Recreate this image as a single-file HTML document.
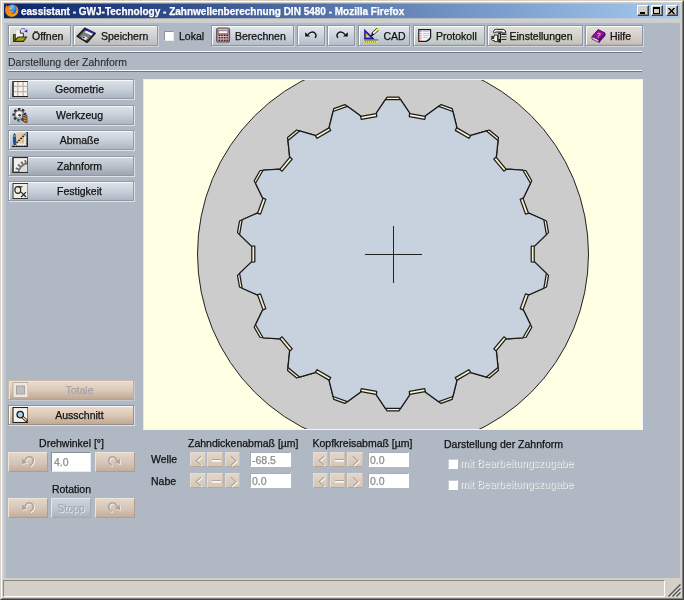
<!DOCTYPE html>
<html><head><meta charset="utf-8">
<style>
*{box-sizing:border-box;margin:0;padding:0}
html,body{width:684px;height:600px;overflow:hidden;background:#afb8c3;font-family:"Liberation Sans",sans-serif;font-size:10.5px;color:#111;-webkit-text-stroke:0.25px}
.abs{position:absolute}
#frame{position:absolute;left:0;top:0;width:684px;height:600px;background:#d4d0c8}
#inner{position:absolute;left:4px;top:21px;width:676px;height:557px;background:#afb8c3}
#title{position:absolute;left:4px;top:4px;width:676px;height:14px;background:linear-gradient(to right,#0a246a 0%,#a6caf0 100%)}
#title .t{position:absolute;left:17px;top:0px;line-height:15px;font-weight:bold;font-size:10px;color:#fff;white-space:nowrap;letter-spacing:0px}
.wb{position:absolute;top:5px;height:11px;width:12px;background:#d4d0c8;border:1px solid;border-color:#fff #404040 #404040 #fff;box-shadow:inset -1px -1px 0 #808080}
.tb{position:absolute;top:25px;height:21px;border:1px solid #90969e;box-shadow:inset 1px 1px 0 #fbfbfb,1px 1px 0 #d0d6de;background:linear-gradient(#e6e6e6,#d2d2d2 50%,#bdbdbd);font-size:10.5px;line-height:19px;white-space:nowrap;color:#111}
.tb span{position:absolute;top:1px}
.tb.blue{background:linear-gradient(#e2e8ef,#ccd4de 50%,#b4bcc8)}
.sep{position:absolute;left:8px;width:634px;height:2px;border-top:1px solid #f6f8fa;border-bottom:1px solid #6e747c}
.sb{position:absolute;left:8px;width:126px;height:20px;border:1px solid #949aa4;box-shadow:inset 1px 1px 0 #f6f8fa,1px 1px 0 #dde2e8;background:linear-gradient(#dde3ea,#c8d0da 50%,#aeb6c2);font-size:10.5px;line-height:18px;text-align:center;padding-left:17px;color:#111}
.sb.brown{background:linear-gradient(#ecdccd,#dcc9b8 50%,#c0a994);border-color:#9a9088}
.sb.dis{color:#a0a4a8}
.ic{position:absolute;left:3px;top:1px;width:16px;height:16px}
.lbl{position:absolute;white-space:nowrap;font-size:10.5px;line-height:13px;color:#111}
.mini{position:absolute;border:1px solid;border-color:#eee4da #ae9e8f #ae9e8f #eee4da;background:linear-gradient(#e4d6c9,#d6c5b5 55%,#c2ae9c);font-size:10.5px}
.mini.g{border-color:#e8dcd0 #cfbfb0 #b9a796 #e8dcd0;background:linear-gradient(#e3d5c8,#d6c6b6)}
.inp{position:absolute;height:17px;background:#fff;border:1px solid;border-color:#8a9098 #e8ecf0 #e8ecf0 #8a9098;font-size:10.5px;line-height:15px;color:#8c8c8c;padding-left:3px}
</style></head><body>
<div id="root" style="position:absolute;left:0;top:0;width:684px;height:600px;will-change:transform">
<div id="frame">
 <div class="abs" style="left:1px;top:1px;width:682px;height:598px;border:1px solid;border-color:#fff #808080 #808080 #fff"></div>
 <div class="abs" style="left:0;top:0;width:684px;height:600px;border:1px solid;border-color:#d4d0c8 #404040 #404040 #d4d0c8"></div>
 <div class="abs" style="left:4px;top:3px;width:676px;height:1px;opacity:.55;background:linear-gradient(to right,#0a246a 0%,#a6caf0 100%)"></div><div class="abs" style="left:4px;top:18px;width:676px;height:1px;opacity:.3;background:linear-gradient(to right,#0a246a 0%,#a6caf0 100%)"></div><div id="title"><div class="t">eassistant - GWJ-Technology - Zahnwellenberechnung DIN 5480 - Mozilla Firefox</div>
 </div>
 <div id="inner"><div class="abs" style="left:0;top:0;width:2px;height:557px;background:#bcc5cf"></div><div class="abs" style="left:0;top:0;width:676px;height:2px;background:#c6ced8"></div></div>
</div>
<!-- window buttons -->
<div class="wb" style="left:637px"><div class="abs" style="left:2px;top:6px;width:5px;height:2px;background:#000"></div></div>
<div class="wb" style="left:650.5px"><div class="abs" style="left:1.5px;top:1px;width:7px;height:7px;border:1px solid #000;border-top-width:2px"></div></div>
<div class="wb" style="left:665.5px"><svg class="abs" style="left:1.5px;top:1.5px" width="7" height="6" viewBox="0 0 7 6"><path d="M0.5,0 L6.5,6 M6.5,0 L0.5,6" stroke="#000" stroke-width="1.5"/></svg></div>
<!-- firefox icon -->
<svg class="abs" style="left:4px;top:3px" width="16" height="15" viewBox="4 3 16 15">
 <defs><radialGradient id="gl" cx="40%" cy="25%" r="80%"><stop offset="0" stop-color="#7fd0ff"/><stop offset=".5" stop-color="#2e86e0"/><stop offset="1" stop-color="#1a3c98"/></radialGradient>
 <linearGradient id="fx" x1="0" y1="0" x2="1" y2="1"><stop offset="0" stop-color="#f07a10"/><stop offset=".5" stop-color="#f28c14"/><stop offset="1" stop-color="#f6b020"/></linearGradient></defs>
 <circle cx="12.6" cy="9.6" r="5" fill="url(#gl)"/>
 <path d="M6,5 L7.6,6.4 L9.2,5.2 L10,6.8 L12,6.4 L11,8.2 C9.8,8.6 9.4,9.6 10.2,10.6 C11.2,11.8 13,11.4 13.6,10.2 C14.2,12.2 12.6,13.6 10.8,13.2 C12.6,14.6 15.6,13.6 16.2,10.8 C16.8,8.8 16.2,6.8 15.2,5.6 C17.8,6.8 19,9.8 18,12.6 C16.8,16 13,17.6 9.6,16.4 C5.8,15 4.2,11 5.6,7.4Z" fill="url(#fx)"/>
 <path d="M9.4,8.4 L11.4,7.6 L10.6,9.2Z" fill="#fbd0a0"/>
</svg>
<!-- toolbar buttons -->
<div class="tb" style="left:8px;width:63px">
 <svg class="ic" style="left:3px;top:1px" viewBox="0 0 16 16"><path d="M3.8,3 L8.5,3 L11.6,5.5 L11.6,10 L3.8,12Z" fill="#f6f6f6" stroke="#c8c8c8" stroke-width=".6"/><path d="M8.3,3.2 L8.3,6.2 L11.4,6.2" fill="#dcdcdc" stroke="#333" stroke-width="1"/><path d="M11.3,6 L11.3,10" stroke="#333" stroke-width="1"/><path d="M1.6,7.6 L1.6,14.4 L11.4,14.4 L14.6,10 L6.4,10 L3.2,13.2 L3.2,7.6Z" fill="#a4a41c" stroke="#2c2c10" stroke-width="1.1" stroke-linejoin="round"/><path d="M9.2,2.4 C10.2,1.2 12,1.2 13,2.6" fill="none" stroke="#6870e0" stroke-width="1.2"/><path d="M12.2,4.6 L15.2,2.2 L15.4,5.6Z" fill="#2020e8"/></svg>
 <span style="left:23px">Öffnen</span></div>
<div class="tb" style="left:73px;width:85px">
 <svg class="ic" style="left:2px;top:1px;width:20px" viewBox="0 0 20 16"><path d="M0.9,9.3 L8.7,1.1 L19.3,6.4 L11.1,15.6Z" fill="#3c3c3c" stroke="#161616" stroke-width="1.2" stroke-linejoin="round"/><path d="M3.2,9.4 L8.8,3.4 L16.6,7 L10.8,13.2Z" fill="#7c7c7c"/><path d="M8.6,5.2 L10.6,3 L17.4,6 L15.4,8.4Z" fill="#f4f4ec"/><path d="M9.6,3.6 L10.6,2.4 L17.8,5.6 L16.8,6.8Z" fill="#2828e0"/><path d="M5.6,11 L7.8,8.8 L11.8,10.8 L9.6,13.2Z" fill="#e4e4e4"/><path d="M6.6,10.4 L7.6,9.4 L9,10.2 L8,11.2Z" fill="#222"/></svg>
 <span style="left:27px">Speichern</span></div>
<div class="abs" style="left:164px;top:31px;width:10px;height:10px;background:#fff;border:1px solid;border-color:#8a929c #e8ecf0 #e8ecf0 #8a929c"></div>
<div class="lbl" style="left:179px;top:29px;font-size:10.5px;line-height:14px">Lokal</div>
<div class="tb blue" style="left:211px;width:83px">
 <svg class="ic" style="left:3.7px;top:1px" viewBox="0 0 16 16"><rect x=".6" y="1" width="13" height="14" rx="2" fill="#bd838b" stroke="#5c5456" stroke-width="1.1"/><path d="M1.2,6.4 L1.2,3 Q1.2,1.6 2.6,1.6 L11.6,1.6 Q13,1.6 13,3 L13,6.4Z" fill="#8a8486"/><rect x="2.4" y="2.2" width="9.4" height="1" fill="#d8d0d0"/><rect x="3" y="4.2" width="8.2" height="1.8" fill="#fdfdfd"/><g fill="#1c1416"><rect x="2.8" y="7.6" width="1.3" height="1.3"/><rect x="5.4" y="7.6" width="1.3" height="1.3"/><rect x="8" y="7.6" width="1.3" height="1.3"/><rect x="10.6" y="7.6" width="1.3" height="1.3"/><rect x="2.8" y="10.2" width="1.3" height="1.3"/><rect x="5.4" y="10.2" width="1.3" height="1.3"/><rect x="8" y="10.2" width="1.3" height="1.3"/><rect x="10.6" y="10.2" width="1.3" height="1.3"/><rect x="2.8" y="12.6" width="1.3" height="1.3"/><rect x="5.4" y="12.6" width="1.3" height="1.3"/><rect x="8" y="12.6" width="1.3" height="1.3"/><rect x="10.6" y="12.6" width="1.3" height="1.3"/></g><g fill="#f0dfe0" opacity=".7"><rect x="2" y="9" width="10.4" height=".8"/><rect x="2" y="11.6" width="10.4" height=".8"/></g></svg>
 <span style="left:23px">Berechnen</span></div>
<div class="tb blue" style="left:297px;width:28px">
 <svg class="abs" style="left:7px;top:5px" width="12" height="8" viewBox="0 0 12 8"><path d="M3,3.8 C4.5,0.6 8.6,0.2 10.4,2.6 C11.4,4 11,5.6 10,6.8" fill="none" stroke="#111" stroke-width="1.4"/><path d="M0.2,1.2 L0.2,5.6 L5,5.6Z" fill="#111"/></svg></div>
<div class="tb blue" style="left:327px;width:28px">
 <svg class="abs" style="left:8px;top:5px" width="12" height="8" viewBox="0 0 12 8"><path d="M9,3.8 C7.5,0.6 3.4,0.2 1.6,2.6 C0.6,4 1,5.6 2,6.8" fill="none" stroke="#111" stroke-width="1.4"/><path d="M11.8,1.2 L11.8,5.6 L7,5.6Z" fill="#111"/></svg></div>
<div class="tb blue" style="left:358px;width:52px">
 <svg class="ic" style="left:5px;top:1px;width:18px;height:16px" viewBox="0 0 18 16"><path d="M0.9,3.6 L0.9,11.6 L9,11.6Z" fill="#f0a020" stroke="#1c1c9c" stroke-width="1.5" stroke-linejoin="miter"/><path d="M2.6,7.4 L2.6,10 L5.2,10Z" fill="#c8d0e0"/><rect x="0.2" y="12.6" width="14" height="1" fill="#1c1c9c"/><rect x="0.2" y="13.6" width="14" height="2" fill="#f4f020"/><path d="M1.5,14 V15.6 M3.5,14 V15.6 M5.5,14 V15.6 M7.5,14 V15.6 M9.5,14 V15.6 M11.5,14 V15.6" stroke="#1c1c9c" stroke-width=".7" opacity=".6"/><path d="M7.8,8.6 L9.4,6.2" stroke="#111" stroke-width="1.8" stroke-linecap="round"/><path d="M9.2,6.4 L13.2,2.8" stroke="#111" stroke-width="3.2" stroke-linecap="round"/><path d="M9.6,6 L13,3" stroke="#f8f8f8" stroke-width="1.8" stroke-linecap="round"/><path d="M13,3 L15,1.4" stroke="#f4f040" stroke-width="2.2" stroke-linecap="round"/></svg>
 <span style="left:24.5px">CAD</span></div>
<div class="tb" style="left:413px;width:72px;background:linear-gradient(#dfe4e2,#c2c8c6 90%,#b0b6b4)">
 <svg class="ic" style="left:4px;top:1px" viewBox="0 0 16 16"><path d="M0.8,2.6 L12.6,2.6 L12.6,10.4 L8.2,14.4 L0.8,14.4Z" fill="#f8f8fc" stroke="#1c1c1c" stroke-width="1.2" stroke-linejoin="round"/><path d="M5,4.6 H11.4 M5,6.6 H11.4 M5,8.6 H11.4 M5,10.6 H9" stroke="#a8c4ec" stroke-width=".9"/><path d="M2.9,3.6 V13.6" stroke="#f04848" stroke-width="1.1" stroke-dasharray="1.3,1"/><path d="M8,14.2 L12.8,10 L12.4,12.2 L9.6,14.4Z" fill="#1c1c1c"/><path d="M8.6,13.4 L12,10.4 L9,11Z" fill="#d8d8dc"/></svg>
 <span style="left:22px">Protokoll</span></div>
<div class="tb" style="left:487px;width:96px;background:linear-gradient(#e2e2da,#c6c6bc 90%,#b4b4aa)">
 <svg class="ic" style="left:3px;top:1px;width:18px" viewBox="0 0 18 16"><path d="M2.4,4.6 C3,2.6 5,1.8 7,2.4 L12.4,2.4 L14.6,4 L14.6,6 L11,6 L11,5 L6,5 C4.6,5 3.6,5.6 3.2,6.2Z" fill="#ececec" stroke="#1c1c1c" stroke-width="1"/><rect x="7.2" y="5.6" width="2.8" height="10" fill="#1c1c1c"/><rect x="7.8" y="7" width="1" height="5" fill="#e8e8e8"/><path d="M0.6,9.4 L3.4,9.4 L3.4,8 L6.6,8 L6.6,14.6 L3.4,14.6 L3.4,13.6 L1.8,13.6 C0.6,13 0.4,12 0.6,11.4 L3,11.4 L3,10.6 L0.6,10.6Z" fill="#f2f2f2" stroke="#1c1c1c" stroke-width=".9"/><g fill="#1c1c1c"><rect x="10.4" y="6.8" width="5" height="1.3"/><rect x="10.4" y="9.2" width="5" height="1.3"/><rect x="10.4" y="11.6" width="5" height="1.3"/></g><g fill="#f4f4f4"><rect x="10.4" y="8.1" width="5" height="1.1"/><rect x="10.4" y="10.5" width="5" height="1.1"/></g></svg>
 <span style="left:21.5px">Einstellungen</span></div>
<div class="tb" style="left:585px;width:58px;background:linear-gradient(#e6e0dc,#cac2bc 90%,#b8aea8)">
 <svg class="ic" style="left:5px;top:1px;width:17px" viewBox="0 0 17 16"><path d="M1,9.6 L7.2,2.6 L14,6 L8,13Z" fill="#9010ac" stroke="#3c0850" stroke-width=".9" stroke-linejoin="round"/><path d="M1,9.6 L8,13 L8,15.4 L1,12Z" fill="#fafafa" stroke="#3c0850" stroke-width=".8" stroke-linejoin="round"/><path d="M8,13 L14,6 L14,8.6 L8,15.4Z" fill="#6a0c84" stroke="#3c0850" stroke-width=".8" stroke-linejoin="round"/><path d="M2,11.6 L7.6,14.4" stroke="#b0b0b8" stroke-width=".6"/><text x="5.6" y="10.4" font-size="7" font-weight="bold" fill="#fcd820" font-family="Liberation Sans, sans-serif" transform="rotate(8 7 8)">?</text></svg>
 <span style="left:24px">Hilfe</span></div>
<div class="sep" style="top:51px"></div>
<div class="lbl" style="left:8px;top:55px;font-size:10.5px;line-height:14px;color:#2c2c2c;-webkit-text-stroke:0.1px">Darstellung der Zahnform</div>
<div class="sep" style="top:70px"></div>

<div class="sb" style="top:79px"><svg class="ic" viewBox="0 0 16 16"><rect x="1" y=".5" width="15" height="15" fill="#f6f2ec" stroke="#3a3a3a" stroke-width="1"/><path d="M5.8,1 V15 M11.2,1 V15" stroke="#c4b2b2" stroke-width="1.3"/><path d="M1.5,5.4 H15.5 M1.5,10.6 H15.5" stroke="#c4b2b2" stroke-width="1.3"/><path d="M1,.5 V15.5 H16" fill="none" stroke="#222" stroke-width="1.2"/></svg>Geometrie</div>
<div class="sb" style="top:105px"><svg class="ic" viewBox="0 0 16 16"><circle cx="7.4" cy="7.8" r="5.4" fill="#8a8a8a" stroke="#333" stroke-dasharray="2.3,1.6" stroke-width="3"/><circle cx="7.4" cy="7.8" r="4.6" fill="#bcbcbc" stroke="#444" stroke-width=".6"/><circle cx="6.8" cy="7.2" r="2.8" fill="#f6f6f6"/><circle cx="7.6" cy="8.2" r="1.2" fill="#2a2a2a"/><path d="M10.6,7.4 L15,8.6 L15,15.8 L11.4,14.6Z" fill="#ecb424" stroke="#402008" stroke-width=".7"/><path d="M11.2,9.4 L14.8,10.6 M11.4,11.8 L14.8,13" stroke="#2838c8" stroke-width="1.2"/><path d="M11.4,13.8 L14.8,15" stroke="#d02020" stroke-width="1"/><circle cx="7.8" cy="13.6" r="1" fill="#60c8e8"/></svg>Werkzeug</div>
<div class="sb" style="top:130px"><svg class="ic" viewBox="0 0 16 16"><rect x="5.2" y=".6" width="6.4" height="11.6" fill="#f2c890"/><rect x="10.4" y="2" width="1.4" height="10.2" fill="#b8b0ac"/><path d="M1,14.3 L15.2,0.4 L15.2,14.3Z" fill="none" stroke="#1c1c1c" stroke-width="1.5" stroke-linejoin="miter"/><path d="M1.6,13.6 L14.6,1" stroke="#f4f4f4" stroke-width="1.3" stroke-dasharray="1.2,1.6"/><path d="M12.6,5 L12.6,12.4 L5,12.4" fill="none" stroke="#f0ece4" stroke-width="1.6"/><path d="M13.9,2 V13.4" stroke="#f4f4f4" stroke-width="1" stroke-dasharray="1,1.6"/><path d="M3,13.6 H14" stroke="#f4f4f4" stroke-width=".9" stroke-dasharray="1,1.6"/><path d="M1.4,3.4 L2.5,1.4 L3.6,3.4 L3.6,10.4 L2.5,13 L1.4,10.4Z" fill="#1c50b0" stroke="#0c2048" stroke-width=".6"/><rect x="1.4" y="3.4" width="2.2" height="1.2" fill="#e8c020"/></svg>Abmaße</div>
<div class="sb" style="top:156px;background:linear-gradient(#d2d8e0,#b9c1cb 50%,#9ea6b2)"><svg class="ic" style="top:0px" viewBox="0 0 16 16"><rect x="1" y=".5" width="15" height="15" fill="#f2f0ea" stroke="#4a4a4a" stroke-width="1"/><circle cx="17" cy="17" r="12.8" fill="none" stroke="#6a6a6a" stroke-width="3.2" stroke-dasharray="1.8,1.9"/><circle cx="17" cy="17" r="10.8" fill="#e0deda" stroke="#747474" stroke-width="1.8"/><rect x="1" y=".5" width="15" height="15" fill="none" stroke="#2c2c2c" stroke-width="1.2"/><path d="M17,0 V17 H0" fill="none" stroke="#c0c7d0" stroke-width="1"/></svg>Zahnform</div>
<div class="sb" style="top:181px"><svg class="ic" viewBox="0 0 16 16"><rect x="1" y=".5" width="15" height="15" fill="#f0ede4" stroke="#3a3a3a" stroke-width="1"/><ellipse cx="5.8" cy="7" rx="2.9" ry="3.4" fill="none" stroke="#222" stroke-width="1.2"/><path d="M6.5,3.8 H10.4" stroke="#222" stroke-width="1.1"/><path d="M9.2,9.2 L14,14 M14,9.2 L9.2,14" stroke="#222" stroke-width="1.2"/></svg>Festigkeit</div>
<div class="sb brown dis" style="top:380px;border-color:#c9b9aa #bfae9e #b5a392 #c9b9aa;box-shadow:inset 1px 1px 0 #efe3d8,1px 1px 0 #c4cad2"><svg class="ic" viewBox="0 0 16 16"><rect x="1" y=".5" width="15" height="15" fill="#ebe7e3" stroke="#b4b0ac"/><rect x="4.5" y="4" width="8" height="8" fill="#c2beba" stroke="#a6a29e"/></svg>Totale</div>
<div class="sb brown" style="top:405px"><svg class="ic" viewBox="0 0 16 16"><rect x="1" y=".5" width="15" height="15" fill="#f6f2ec" stroke="#222" stroke-width="1.1"/><path d="M10.4,10 L14.2,13.4" stroke="#1c1c1c" stroke-width="3" stroke-linecap="round"/><path d="M10.6,10.2 L14,13.2" stroke="#f2c690" stroke-width="1.6" stroke-linecap="round"/><circle cx="8.2" cy="7.6" r="3.2" fill="#a8d0f4" stroke="#1c1c1c" stroke-width="1.3"/></svg>Ausschnitt</div>

<div class="abs" style="left:143px;top:79px;width:500px;height:351px;border:1px solid;border-color:#eef0f0 #f4f6f8 #f4f6f8 #e4e8e4;background:#ffffe6"></div>
<svg class="abs" style="left:144px;top:80px" width="498" height="349" viewBox="144 80 498 349">
 <rect x="144" y="80" width="498" height="349" fill="#ffffe4"/>
 <circle cx="393" cy="254" r="195.5" fill="#cccccc" stroke="#222" stroke-width="1"/>
 <path d="M376.0,113.6 L387.1,97.1 L398.9,97.1 L410.0,113.6 L425.0,116.3 L441.1,104.6 L452.2,108.6 L457.0,127.9 L470.2,135.5 L489.3,130.0 L498.4,137.6 L496.3,157.4 L506.0,169.1 L525.9,170.5 L531.8,180.7 L523.1,198.6 L528.3,212.8 L546.5,221.0 L548.5,232.6 L534.2,246.4 L534.2,261.6 L548.5,275.4 L546.5,287.0 L528.3,295.2 L523.1,309.4 L531.8,327.3 L525.9,337.5 L506.0,338.9 L496.3,350.6 L498.4,370.4 L489.3,378.0 L470.2,372.5 L457.0,380.1 L452.2,399.4 L441.1,403.4 L425.0,391.7 L410.0,394.4 L398.9,410.9 L387.1,410.9 L376.0,394.4 L361.0,391.7 L344.9,403.4 L333.8,399.4 L329.0,380.1 L315.8,372.5 L296.7,378.0 L287.6,370.4 L289.7,350.6 L280.0,338.9 L260.1,337.5 L254.2,327.3 L262.9,309.4 L257.7,295.2 L239.5,287.0 L237.5,275.4 L251.8,261.6 L251.8,246.4 L237.5,232.6 L239.5,221.0 L257.7,212.8 L262.9,198.6 L254.2,180.7 L260.1,170.5 L280.0,169.1 L289.7,157.4 L287.6,137.6 L296.7,130.0 L315.8,135.5 L329.0,127.9 L333.8,108.6 L344.9,104.6 L361.0,116.3Z" fill="#f6f2cc" stroke="#1a1a1a" stroke-width="1.25" stroke-linejoin="round"/>
 <path d="M376.7,116.6 L376.4,113.0 L385.4,99.6 L400.6,99.6 L409.6,113.0 L409.3,116.6 L424.7,119.3 L425.6,115.8 L438.7,106.3 L452.9,111.5 L456.8,127.2 L455.3,130.4 L468.9,138.3 L470.9,135.3 L486.5,130.9 L498.0,140.6 L496.4,156.6 L493.8,159.2 L503.9,171.2 L506.8,169.1 L522.9,170.2 L530.5,183.3 L523.4,197.9 L520.2,199.4 L525.5,214.1 L529.0,213.2 L543.8,219.7 L546.4,234.6 L534.8,245.9 L531.2,246.2 L531.2,261.8 L534.8,262.1 L546.4,273.4 L543.8,288.3 L529.0,294.8 L525.5,293.9 L520.2,308.6 L523.4,310.1 L530.5,324.7 L522.9,337.8 L506.8,338.9 L503.9,336.8 L493.8,348.8 L496.4,351.4 L498.0,367.4 L486.5,377.1 L470.9,372.7 L468.9,369.7 L455.3,377.6 L456.8,380.8 L452.9,396.5 L438.7,401.7 L425.6,392.2 L424.7,388.7 L409.3,391.4 L409.6,395.0 L400.6,408.4 L385.4,408.4 L376.4,395.0 L376.7,391.4 L361.3,388.7 L360.4,392.2 L347.3,401.7 L333.1,396.5 L329.2,380.8 L330.7,377.6 L317.1,369.7 L315.1,372.7 L299.5,377.1 L288.0,367.4 L289.6,351.4 L292.2,348.8 L282.1,336.8 L279.2,338.9 L263.1,337.8 L255.5,324.7 L262.6,310.1 L265.8,308.6 L260.5,293.9 L257.0,294.8 L242.2,288.3 L239.6,273.4 L251.2,262.1 L254.8,261.8 L254.8,246.2 L251.2,245.9 L239.6,234.6 L242.2,219.7 L257.0,213.2 L260.5,214.1 L265.8,199.4 L262.6,197.9 L255.5,183.3 L263.1,170.2 L279.2,169.1 L282.1,171.2 L292.2,159.2 L289.6,156.6 L288.0,140.6 L299.5,130.9 L315.1,135.3 L317.1,138.3 L330.7,130.4 L329.2,127.2 L333.1,111.5 L347.3,106.3 L360.4,115.8 L361.3,119.3Z" fill="#c8d2de" stroke="#1a1a1a" stroke-width="1.25" stroke-linejoin="round"/>
 <path d="M393.5,226 V283 M365,254.5 H422" stroke="#222" stroke-width="1"/>
</svg>

<div class="lbl" style="left:8px;top:437px;width:127px;text-align:center">Drehwinkel [°]</div>
<div class="mini" style="left:8px;top:452px;width:40px;height:20px;"><svg class="abs" style="left:12px;top:2px" width="15" height="13" viewBox="0 0 15 13"><g transform="translate(0.8,0.8)"><path d="M3.8,6 C4.8,2.2 8,1 10.3,2.2 C13.2,3.8 13,8.6 9.2,10.6" fill="none" stroke="#f6f3ef" stroke-width="1.7"/><path d="M0.8,8.9 L1.4,3.4 L6.2,7.9Z" fill="#f6f3ef"/></g><path d="M3.8,6 C4.8,2.2 8,1 10.3,2.2 C13.2,3.8 13,8.6 9.2,10.6" fill="none" stroke="#aaa49e" stroke-width="1.6"/><path d="M0.8,8.9 L1.4,3.4 L6.2,7.9Z" fill="#aaa49e"/></svg></div>
<div class="inp" style="left:51px;top:452px;width:40px;height:20px;line-height:18px;padding-left:2px">4.0</div>
<div class="mini" style="left:95px;top:452px;width:40px;height:20px;"><svg class="abs" style="left:11px;top:2px" width="15" height="13" viewBox="0 0 15 13"><g transform="translate(0.8,0.8)"><path d="M10.2,6 C9.2,2.2 6,1 3.7,2.2 C0.8,3.8 1,8.6 4.8,10.6" fill="none" stroke="#f6f3ef" stroke-width="1.7"/><path d="M13.2,8.9 L12.6,3.4 L7.8,7.9Z" fill="#f6f3ef"/></g><path d="M10.2,6 C9.2,2.2 6,1 3.7,2.2 C0.8,3.8 1,8.6 4.8,10.6" fill="none" stroke="#aaa49e" stroke-width="1.6"/><path d="M13.2,8.9 L12.6,3.4 L7.8,7.9Z" fill="#aaa49e"/></svg></div>
<div class="lbl" style="left:8px;top:483px;width:127px;text-align:center">Rotation</div>
<div class="mini" style="left:8px;top:498px;width:40px;height:20px;"><svg class="abs" style="left:12px;top:2px" width="15" height="13" viewBox="0 0 15 13"><g transform="translate(0.8,0.8)"><path d="M3.8,6 C4.8,2.2 8,1 10.3,2.2 C13.2,3.8 13,8.6 9.2,10.6" fill="none" stroke="#f6f3ef" stroke-width="1.7"/><path d="M0.8,8.9 L1.4,3.4 L6.2,7.9Z" fill="#f6f3ef"/></g><path d="M3.8,6 C4.8,2.2 8,1 10.3,2.2 C13.2,3.8 13,8.6 9.2,10.6" fill="none" stroke="#aaa49e" stroke-width="1.6"/><path d="M0.8,8.9 L1.4,3.4 L6.2,7.9Z" fill="#aaa49e"/></svg></div>
<div class="mini" style="left:51px;top:498px;width:40px;height:20px;text-align:center;color:#a4a8ae;text-shadow:1px 1px 0 #e8ecf0;line-height:18px;background:linear-gradient(#ccd4de,#bcc4ce 60%,#aab2bc);border-color:#e4e8ee #a2aab4 #a2aab4 #e4e8ee">Stopp</div>
<div class="mini" style="left:95px;top:498px;width:40px;height:20px;"><svg class="abs" style="left:11px;top:2px" width="15" height="13" viewBox="0 0 15 13"><g transform="translate(0.8,0.8)"><path d="M10.2,6 C9.2,2.2 6,1 3.7,2.2 C0.8,3.8 1,8.6 4.8,10.6" fill="none" stroke="#f6f3ef" stroke-width="1.7"/><path d="M13.2,8.9 L12.6,3.4 L7.8,7.9Z" fill="#f6f3ef"/></g><path d="M10.2,6 C9.2,2.2 6,1 3.7,2.2 C0.8,3.8 1,8.6 4.8,10.6" fill="none" stroke="#aaa49e" stroke-width="1.6"/><path d="M13.2,8.9 L12.6,3.4 L7.8,7.9Z" fill="#aaa49e"/></svg></div>
<div class="lbl" style="left:188px;top:437px">Zahndickenabmaß [µm]</div>
<div class="lbl" style="left:312.5px;top:437px">Kopfkreisabmaß [µm]</div>
<div class="lbl" style="left:151px;top:453px">Welle</div>
<div class="lbl" style="left:151px;top:475px">Nabe</div>
<div class="mini g" style="left:190px;top:452px;width:15.5px;height:15px"><svg class="abs" style="left:3px;top:2px" width="10" height="12" viewBox="0 0 10 12"><path d="M8,2 L3,6.5 L8,11" fill="none" stroke="#faf7f4" stroke-width="1.5"/><path d="M7,1.2 L2,5.7 L7,10.2" fill="none" stroke="#a9a5a1" stroke-width="1.2"/></svg></div>
<div class="mini g" style="left:207.3px;top:452px;width:15.5px;height:15px"><div class="abs" style="left:4px;top:6px;width:9px;height:1px;background:#a9a5a1;box-shadow:0 1px 0 #faf7f4,0 2px 0 #f0ebe6"></div></div>
<div class="mini g" style="left:224.6px;top:452px;width:15.5px;height:15px"><svg class="abs" style="left:3px;top:2px" width="10" height="12" viewBox="0 0 10 12"><path d="M3,2 L8,6.5 L3,11" fill="none" stroke="#faf7f4" stroke-width="1.5"/><path d="M2,1.2 L7,5.7 L2,10.2" fill="none" stroke="#a9a5a1" stroke-width="1.2"/></svg></div>
<div class="mini g" style="left:312.5px;top:452px;width:15.5px;height:15px"><svg class="abs" style="left:3px;top:2px" width="10" height="12" viewBox="0 0 10 12"><path d="M8,2 L3,6.5 L8,11" fill="none" stroke="#faf7f4" stroke-width="1.5"/><path d="M7,1.2 L2,5.7 L7,10.2" fill="none" stroke="#a9a5a1" stroke-width="1.2"/></svg></div>
<div class="mini g" style="left:329.8px;top:452px;width:15.5px;height:15px"><div class="abs" style="left:4px;top:6px;width:9px;height:1px;background:#a9a5a1;box-shadow:0 1px 0 #faf7f4,0 2px 0 #f0ebe6"></div></div>
<div class="mini g" style="left:347.1px;top:452px;width:15.5px;height:15px"><svg class="abs" style="left:3px;top:2px" width="10" height="12" viewBox="0 0 10 12"><path d="M3,2 L8,6.5 L3,11" fill="none" stroke="#faf7f4" stroke-width="1.5"/><path d="M2,1.2 L7,5.7 L2,10.2" fill="none" stroke="#a9a5a1" stroke-width="1.2"/></svg></div>
<div class="mini g" style="left:190px;top:473px;width:15.5px;height:15px"><svg class="abs" style="left:3px;top:2px" width="10" height="12" viewBox="0 0 10 12"><path d="M8,2 L3,6.5 L8,11" fill="none" stroke="#faf7f4" stroke-width="1.5"/><path d="M7,1.2 L2,5.7 L7,10.2" fill="none" stroke="#a9a5a1" stroke-width="1.2"/></svg></div>
<div class="mini g" style="left:207.3px;top:473px;width:15.5px;height:15px"><div class="abs" style="left:4px;top:6px;width:9px;height:1px;background:#a9a5a1;box-shadow:0 1px 0 #faf7f4,0 2px 0 #f0ebe6"></div></div>
<div class="mini g" style="left:224.6px;top:473px;width:15.5px;height:15px"><svg class="abs" style="left:3px;top:2px" width="10" height="12" viewBox="0 0 10 12"><path d="M3,2 L8,6.5 L3,11" fill="none" stroke="#faf7f4" stroke-width="1.5"/><path d="M2,1.2 L7,5.7 L2,10.2" fill="none" stroke="#a9a5a1" stroke-width="1.2"/></svg></div>
<div class="mini g" style="left:312.5px;top:473px;width:15.5px;height:15px"><svg class="abs" style="left:3px;top:2px" width="10" height="12" viewBox="0 0 10 12"><path d="M8,2 L3,6.5 L8,11" fill="none" stroke="#faf7f4" stroke-width="1.5"/><path d="M7,1.2 L2,5.7 L7,10.2" fill="none" stroke="#a9a5a1" stroke-width="1.2"/></svg></div>
<div class="mini g" style="left:329.8px;top:473px;width:15.5px;height:15px"><div class="abs" style="left:4px;top:6px;width:9px;height:1px;background:#a9a5a1;box-shadow:0 1px 0 #faf7f4,0 2px 0 #f0ebe6"></div></div>
<div class="mini g" style="left:347.1px;top:473px;width:15.5px;height:15px"><svg class="abs" style="left:3px;top:2px" width="10" height="12" viewBox="0 0 10 12"><path d="M3,2 L8,6.5 L3,11" fill="none" stroke="#faf7f4" stroke-width="1.5"/><path d="M2,1.2 L7,5.7 L2,10.2" fill="none" stroke="#a9a5a1" stroke-width="1.2"/></svg></div>
<div class="inp" style="left:250px;top:452px;width:41px;height:15px;line-height:14px;padding-left:1px;border-color:#a8aeb6 #fff #fff #a8aeb6">-68.5</div>
<div class="inp" style="left:250px;top:473px;width:41px;height:15px;line-height:14px;padding-left:1px;border-color:#a8aeb6 #fff #fff #a8aeb6">0.0</div>
<div class="inp" style="left:368px;top:452px;width:41px;height:15px;line-height:14px;padding-left:1px;border-color:#a8aeb6 #fff #fff #a8aeb6">0.0</div>
<div class="inp" style="left:368px;top:473px;width:41px;height:15px;line-height:14px;padding-left:1px;border-color:#a8aeb6 #fff #fff #a8aeb6">0.0</div>
<div class="lbl" style="left:444px;top:438px">Darstellung der Zahnform</div>
<div class="abs" style="left:448px;top:458.5px;width:10px;height:10px;background:#fff;border:1px solid;border-color:#c8ccd0 #fff #fff #c8ccd0"></div>
<div class="lbl" style="left:460px;top:457px;color:#b9bdc2;text-shadow:1px 1px 0 #f2f4f6">mit Bearbeitungszugabe</div>
<div class="abs" style="left:448px;top:480px;width:10px;height:10px;background:#fff;border:1px solid;border-color:#c8ccd0 #fff #fff #c8ccd0"></div>
<div class="lbl" style="left:460px;top:478px;color:#b9bdc2;text-shadow:1px 1px 0 #f2f4f6">mit Bearbeitungszugabe</div>

<div class="abs" style="left:4px;top:578px;width:676px;height:20px;background:#d4d0c8"></div>
<div class="abs" style="left:3px;top:580px;width:662px;height:17px;border:1px solid;border-color:#8c8a84 #fff #fff #8c8a84"></div>
<svg class="abs" style="left:668px;top:584px" width="13" height="13" viewBox="0 0 13 13"><path d="M12.5,1.5 L1.5,12.5 M12.5,5.5 L5.5,12.5 M12.5,9.5 L9.5,12.5" stroke="#fff" stroke-width="1.2"/><path d="M12.5,0.5 L0.5,12.5 M12.5,4.5 L4.5,12.5 M12.5,8.5 L8.5,12.5" stroke="#55524c" stroke-width="1.5"/></svg>

</div>
</body></html>
